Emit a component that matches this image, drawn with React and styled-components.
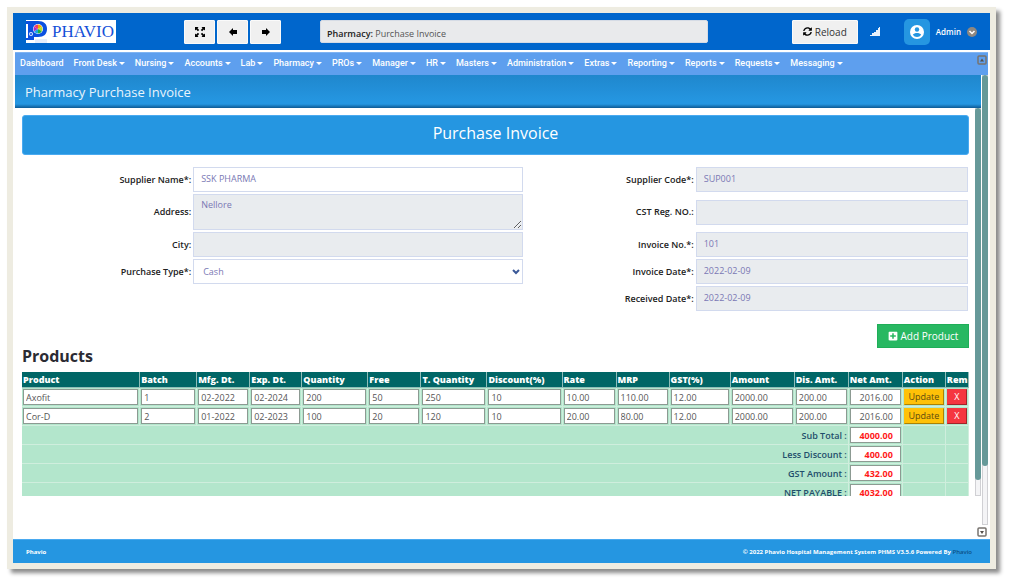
import React from "react";
import styled, { createGlobalStyle } from "styled-components";
import { FaPlusSquare, FaSyncAlt } from "react-icons/fa";

const menus = [
  "Front Desk",
  "Nursing",
  "Accounts",
  "Lab",
  "Pharmacy",
  "PROs",
  "Manager",
  "HR",
  "Masters",
  "Administration",
  "Extras",
  "Reporting",
  "Reports",
  "Requests",
  "Messaging",
];

// share = relative width of the column
const columns = [
  { name: "Product", share: 118 },
  { name: "Batch", share: 57 },
  { name: "Mfg. Dt.", share: 53 },
  { name: "Exp. Dt.", share: 52 },
  { name: "Quantity", share: 66 },
  { name: "Free", share: 53 },
  { name: "T. Quantity", share: 66 },
  { name: "Discount(%)", share: 75 },
  { name: "Rate", share: 54 },
  { name: "MRP", share: 53 },
  { name: "GST(%)", share: 61 },
  { name: "Amount", share: 64 },
  { name: "Dis. Amt.", share: 54 },
  { name: "Net Amt.", share: 54 },
  { name: "Action", share: 43 },
  { name: "Rem", share: 23 },
];
const totalShare = columns.reduce((sum, c) => sum + c.share, 0);

const products = [
  ["Axofit", "1", "02-2022", "02-2024", "200", "50", "250", "10", "10.00", "110.00", "12.00", "2000.00", "200.00", "2016.00"],
  ["Cor-D", "2", "01-2022", "02-2023", "100", "20", "120", "10", "20.00", "80.00", "12.00", "2000.00", "200.00", "2016.00"],
];

const totals = [
  ["Sub Total :", "4000.00"],
  ["Less Discount :", "400.00"],
  ["GST Amount :", "432.00"],
  ["NET PAYABLE :", "4032.00"],
];

const LogoMark = () => (
  <svg width="22" height="23" viewBox="0 0 22 23" aria-hidden="true">
    <path d="M0 1h12c6 0 9 3 9 8s-3 8-9 8H8v3H0v-2h2V4H0z" fill="#0a50e0" />
    <circle cx="12" cy="9" r="5" fill="#fff" />
    <path d="M12 9V4.500a4.500 4.500 0 0 1 3.900 2.200z" fill="#f7a600" />
    <path d="M12 9l3.900-2.300a4.500 4.500 0 0 1 0 4.600z" fill="#b6dd2a" />
    <path d="M12 9l3.900 2.300A4.500 4.500 0 0 1 12 13.500z" fill="#1fb141" />
    <path d="M12 9v4.500a4.500 4.500 0 0 1-3.900-2.200z" fill="#19a7e0" />
    <path d="M12 9l-3.900 2.300a4.500 4.500 0 0 1 0-4.600z" fill="#a52fc8" />
    <path d="M12 9L8.100 6.700A4.500 4.500 0 0 1 12 4.500z" fill="#f03a6a" />
    <circle cx="5" cy="14" r="2" fill="#dfe9ff" />
    <circle cx="5" cy="14" r="1" fill="#0a50e0" />
    <path d="M9 20h12M9 22h12" stroke="#cddcf8" />
  </svg>
);

const ExpandIcon = () => (
  <svg width="12" height="12" viewBox="0 0 12 12" aria-hidden="true">
    <path
      d="M1 1h3.500L3.500 2.200 5.200 3.900 3.900 5.200 2.200 3.500 1 4.500zM11 1v3.500L9.800 3.500 8.100 5.200 6.800 3.900 8.500 2.200 7.500 1zM1 11V7.500l1.200 1 1.700-1.700 1.300 1.300-1.700 1.700 1 1.200zM11 11H7.500l1-1.200-1.700-1.700 1.300-1.300 1.700 1.700 1.200-1z"
      fill="#000"
    />
  </svg>
);

const FatArrow = ({ flip }) => (
  <svg width="8" height="8" viewBox="0 0 8 8" aria-hidden="true">
    <path d={flip ? "M8 4L4 0v2H0v4h4v2z" : "M0 4l4-4v2h4v4H4v2z"} fill="#000" />
  </svg>
);

const SignalIcon = () => (
  <svg width="10" height="9" viewBox="0 0 10 9" role="img" aria-label="Signal">
    <path d="M0 9V8h2V6h2V5h2V3h2V1h1V0h1v9z" fill="#e8f1fb" />
  </svg>
);

const PersonIcon = () => (
  <svg width="14" height="14" viewBox="0 0 14 14" aria-hidden="true">
    <circle cx="7" cy="7" r="7" fill="#fff" />
    <circle cx="7" cy="4.500" r="2.200" fill="#2596e1" />
    <path d="M2.800 9.800C3.500 8.600 5.500 8 7 8s3.500.600 4.200 1.800A5 5 0 0 1 7 12a5 5 0 0 1-4.200-2.200z" fill="#2596e1" />
  </svg>
);

const CircleChevron = () => (
  <svg width="10" height="10" viewBox="0 0 10 10" aria-hidden="true">
    <circle cx="5" cy="5" r="5" fill="#8d8780" />
    <path d="M2.500 4L5 6.500 7.500 4" fill="none" stroke="#fff" strokeWidth="1.500" />
  </svg>
);

const ScrollArrow = ({ up }) => (
  <svg width="10" height="10" viewBox="0 0 10 10" aria-hidden="true">
    <rect x="1" y="1" width="8" height="8" rx="1" fill={up ? "none" : "#fff"} stroke="#77736f" strokeWidth="1.500" />
    <path d={up ? "M3 6.500h4L5 3.500z" : "M3 4h4L5 7z"} fill="#55504c" />
  </svg>
);

const Field = ({ id, label, value, col, row, readOnly }) => (
  <>
    <Label htmlFor={id} $col={col} $row={row}>
      {label}
    </Label>
    <TextBox id={id} defaultValue={value} readOnly={readOnly} $col={col + 1} $row={row} />
  </>
);

const App = () => {
  return (
    <Page>
      <GlobalStyle />
      <Frame>
        <TopBar>
          <Logo>
            <LogoMark />
            <LogoText>PHAVIO</LogoText>
          </Logo>
          <ToolGroup>
            <ToolButton aria-label="Full screen">
              <ExpandIcon />
            </ToolButton>
            <ToolButton aria-label="Back">
              <FatArrow />
            </ToolButton>
            <ToolButton aria-label="Forward">
              <FatArrow flip />
            </ToolButton>
          </ToolGroup>
          <Crumb>
            <b>Pharmacy:</b> Purchase Invoice
          </Crumb>
          <UserArea>
            <Reload>
              <FaSyncAlt size={9} color="#000" />
              Reload
            </Reload>
            <SignalIcon />
            <User>
              <Avatar>
                <PersonIcon />
              </Avatar>
              Admin
              <CircleChevron />
            </User>
          </UserArea>
        </TopBar>

        <Nav>
          <NavLink href="#">Dashboard</NavLink>
          {menus.map((name) => (
            <NavButton key={name}>
              {name}
              <Caret />
            </NavButton>
          ))}
          <NavEnd>
            <ScrollArrow up />
          </NavEnd>
        </Nav>

        <Middle>
          <Main>
            <PageTitle>Pharmacy Purchase Invoice</PageTitle>
            <Scroller>
              <Content>
                <Banner>Purchase Invoice</Banner>
                <Form>
                  <Field id="supplier" label="Supplier Name*:" value="SSK PHARMA" col={1} row={1} />
                  <Label htmlFor="address" $col={1} $row={2}>
                    Address:
                  </Label>
                  <Address id="address" defaultValue="Nellore" readOnly />
                  <Field id="city" label="City:" value="" col={1} row={3} readOnly />
                  <Label htmlFor="type" $col={1} $row={4}>
                    Purchase Type*:
                  </Label>
                  <SelectWrap>
                    <Select id="type" defaultValue="Cash">
                      <option>Cash</option>
                      <option>Credit</option>
                    </Select>
                    <svg width="8" height="6" viewBox="0 0 8 6" aria-hidden="true">
                      <path d="M1 1l3 3 3-3" fill="none" stroke="#3b5998" strokeWidth="2" />
                    </svg>
                  </SelectWrap>
                  <Field id="code" label="Supplier Code*:" value="SUP001" col={3} row={1} readOnly />
                  <Field id="cst" label="CST Reg. NO.:" value="" col={3} row={2} readOnly />
                  <Field id="invoice" label="Invoice No.*:" value="101" col={3} row={3} readOnly />
                  <Field id="invdate" label="Invoice Date*:" value="2022-02-09" col={3} row={4} readOnly />
                  <Field id="recdate" label="Received Date*:" value="2022-02-09" col={3} row={5} readOnly />
                </Form>
                <AddButton>
                  <FaPlusSquare size={10} />
                  Add Product
                </AddButton>
                <Heading>Products</Heading>
                <Table>
                  <colgroup>
                    {columns.map((c) => (
                      <Col key={c.name} $share={c.share} />
                    ))}
                  </colgroup>
                  <thead>
                    <tr>
                      {columns.map((c) => (
                        <Th key={c.name}>{c.name}</Th>
                      ))}
                    </tr>
                  </thead>
                  <tbody>
                    {products.map((p) => (
                      <tr key={p[0]}>
                        {p.map((value, i) => (
                          <Td key={columns[i].name}>
                            <CellInput
                              aria-label={columns[i].name}
                              defaultValue={value}
                              $right={i === p.length - 1}
                            />
                          </Td>
                        ))}
                        <Td>
                          <RowButton $bg="#ffc107" $color="#5c4a10">
                            Update
                          </RowButton>
                        </Td>
                        <Td>
                          <RowButton $bg="#f5363f" $color="#fff">
                            X
                          </RowButton>
                        </Td>
                      </tr>
                    ))}
                    {totals.map(([name, value]) => (
                      <tr key={name}>
                        <TotalLabel colSpan={13}>{name}</TotalLabel>
                        <Td>
                          <CellInput aria-label={name} defaultValue={value} readOnly $right $total />
                        </Td>
                        <Td />
                        <Td />
                      </tr>
                    ))}
                  </tbody>
                </Table>
              </Content>
              <Track>
                <Thumb $size={96} />
              </Track>
            </Scroller>
          </Main>
          <Rail>
            <Track>
              <Thumb $size={87} />
            </Track>
          </Rail>
          <RailEnd>
            <ScrollArrow />
          </RailEnd>
        </Middle>

        <Footer>
          <span>Phavio</span>
          <span>
            © 2022 Phavio Hospital Management System PHMS V3.5.6 Powered By <a href="#">Phavio</a>
          </span>
        </Footer>
      </Frame>
    </Page>
  );
};
export default App;

const GlobalStyle = createGlobalStyle`
  * {
    box-sizing: border-box;
  }
  body {
    margin: 0;
    background: #fff;
    font-family: "Open Sans", "Liberation Sans", sans-serif;
    font-size: 9px;
  }
  button, input, select, textarea {
    font-family: inherit;
    font-size: inherit;
    margin: 0;
    border-radius: 0;
  }
  svg {
    display: block;
    flex-shrink: 0;
  }
`;

const Page = styled.div`
  height: 100vh;
  padding: 7px 15px 15px 7px;
`;
const Frame = styled.div`
  height: 100%;
  display: flex;
  flex-direction: column;
  background: #fff;
  border: 6px solid #eeece1;
  box-shadow: 4px 4px 4px #8c8c8c;
`;

const TopBar = styled.header`
  height: 37px;
  padding: 0 13px;
  display: flex;
  align-items: center;
  background: #0066cc;
`;
const Logo = styled.div`
  width: 90px;
  height: 23px;
  display: flex;
  align-items: center;
  gap: 4px;
  background: #fff;
`;
const LogoText = styled.span`
  font-family: "Liberation Serif", serif;
  font-size: 17px;
  line-height: 24px;
  color: #1450d8;
`;
const ToolGroup = styled.div`
  display: flex;
  gap: 2px;
  margin: 0 39px 0 68px;
`;
const ToolButton = styled.button`
  width: 31px;
  height: 24px;
  padding: 0;
  display: flex;
  align-items: center;
  justify-content: center;
  background: #f0f0f0;
  border: 1px solid #fafafa;
  border-radius: 1px;
`;
const Crumb = styled.div`
  flex: 1;
  height: 23px;
  padding: 0 6px;
  line-height: 26px;
  white-space: nowrap;
  color: #555;
  background: #e9eaec;
  border: 1px solid #d5dbe5;
  border-radius: 2px;
  b {
    font-weight: 600;
    color: #222;
  }
`;
const UserArea = styled.div`
  display: flex;
  align-items: center;
  margin-left: 84px;
  gap: 12px;
`;
const Reload = styled.button`
  width: 66px;
  height: 24px;
  padding: 0;
  display: flex;
  align-items: center;
  justify-content: center;
  gap: 3px;
  font-size: 10px;
  color: #333;
  background: #f0f0f0;
  border: 1px solid #fafafa;
  border-radius: 1px;
`;
const User = styled.div`
  display: flex;
  align-items: center;
  gap: 6px;
  margin-left: 12px;
  font-size: 8px;
  font-weight: 600;
  color: #fff;
`;
const Avatar = styled.span`
  width: 26px;
  height: 26px;
  display: flex;
  align-items: center;
  justify-content: center;
  background: #2596e1;
  border-radius: 5px;
`;

const Nav = styled.nav`
  height: 23px;
  margin: 2px 2px 0;
  padding: 0 5px;
  display: flex;
  align-items: flex-start;
  gap: 10px;
  position: relative;
  background: #5e9fee;
  border-top: 1px solid #7fb3f2;
`;
const NavLink = styled.a`
  font-family: Roboto, sans-serif;
  font-size: 9px;
  font-weight: 500;
  line-height: 21px;
  color: #fff;
  text-decoration: none;
`;
const NavButton = styled.button`
  padding: 0;
  display: flex;
  align-items: center;
  gap: 2px;
  font-family: Roboto, sans-serif;
  font-size: 9px;
  font-weight: 500;
  line-height: 21px;
  white-space: nowrap;
  color: #fff;
  background: none;
  border: 0;
`;
const Caret = styled.span`
  border: 3px solid transparent;
  border-top-color: #fff;
  border-bottom: 0;
`;
const NavEnd = styled.span`
  position: absolute;
  top: 2px;
  right: 1px;
`;

const Middle = styled.div`
  flex: 1;
  min-height: 0;
  margin: 0 2px;
  display: flex;
  gap: 1px;
  position: relative;
`;
const Main = styled.main`
  flex: 1;
  min-width: 0;
  display: flex;
  flex-direction: column;
  padding-bottom: 43px;
`;
const PageTitle = styled.h1`
  margin: 0;
  padding: 0 10px;
  height: 33px;
  font-size: 13px;
  font-weight: 400;
  line-height: 34px;
  color: #e9f4fc;
  background: linear-gradient(#1f87cd, #2596e1 80%, #2596e1 88%, #0d5a94);
`;
const Scroller = styled.div`
  flex: 1;
  min-height: 0;
  display: flex;
  overflow: hidden;
`;
const Content = styled.div`
  flex: 1;
  min-width: 0;
  padding: 7px 6px 7px 7px;
`;
const Rail = styled.div`
  display: flex;
  padding-bottom: 14px;
`;
const RailEnd = styled.span`
  position: absolute;
  right: 1px;
  bottom: 2px;
`;
const Track = styled.div`
  width: 6px;
  background: #f4f4f6;
  border: solid #d0d0d4;
  border-width: 0 1px 1px;
`;
const Thumb = styled.div`
  height: ${(props) => props.$size}%;
  margin: 0 -1px;
  background: #669999;
  border-radius: 3px;
`;

const Banner = styled.h2`
  margin: 0 0 12px;
  height: 40px;
  font-size: 16px;
  font-weight: 400;
  line-height: 34px;
  text-align: center;
  color: #fff;
  background: #2596e1;
  border: 1px solid #4aaaf0;
  border-radius: 3px;
`;

const Form = styled.div`
  display: grid;
  grid-template-columns: 171fr 329fr 173fr 272fr;
  grid-template-rows: 25px 36px 25px 25px 25px;
  gap: 2px 0;
  align-items: center;
  padding-right: 1px;
`;
const Label = styled.label`
  grid-column: ${(props) => props.$col};
  grid-row: ${(props) => props.$row};
  padding: 0 2px 1px 0;
  text-align: right;
  font-weight: 600;
  color: #222;
`;
const TextBox = styled.input`
  grid-column: ${(props) => props.$col};
  grid-row: ${(props) => props.$row};
  width: 100%;
  height: 25px;
  padding: 0 7px 2px;
  color: #7a78b4;
  background: ${(props) => (props.readOnly ? "#e9ecef" : "#fff")};
  border: 1px solid #d2daee;
`;
const Address = styled.textarea`
  grid-column: 2;
  grid-row: 2;
  width: 100%;
  height: 36px;
  padding: 3px 7px;
  color: #7a78b4;
  background: #e9ecef;
  border: 1px solid #d2daee;
`;
const SelectWrap = styled.div`
  grid-column: 2;
  grid-row: 4;
  position: relative;
  svg {
    position: absolute;
    right: 3px;
    top: 10px;
    pointer-events: none;
  }
`;
const Select = styled.select`
  width: 100%;
  height: 25px;
  padding: 0 9px;
  appearance: none;
  color: #7a78b4;
  background: #fff;
  border: 1px solid #d2daee;
`;

const AddButton = styled.button`
  width: 92px;
  height: 24px;
  margin: 13px 0 0 auto;
  padding: 0;
  display: flex;
  align-items: center;
  justify-content: center;
  gap: 3px;
  font-size: 10px;
  color: #fff;
  background: #28b862;
  border: 1px solid #1fae58;
`;
const Heading = styled.h3`
  margin: 0;
  font-size: 16px;
  font-weight: 700;
  line-height: 16px;
  padding-bottom: 8px;
  color: #2b2b33;
`;

const Table = styled.table`
  width: 100%;
  table-layout: fixed;
  border-collapse: separate;
  border-spacing: 0;
  background: #b3e6cc;
`;
const Col = styled.col`
  width: ${(props) => (props.$share / totalShare) * 100}%;
`;
const Th = styled.th`
  height: 16px;
  padding: 0 0 0 1px;
  overflow: hidden;
  font-size: 9px;
  font-weight: 800;
  line-height: 14px;
  text-align: left;
  white-space: nowrap;
  color: #fff;
  background: #006666;
  border-right: 1px solid #8fbdb8;
  border-bottom: 1px solid #8fbdb8;
`;
const Td = styled.td`
  height: 19px;
  padding: 1px;
  border-right: 1px solid #cfeedd;
  border-bottom: 1px solid #cfeedd;
`;
const TotalLabel = styled.th`
  height: 19px;
  padding: 1px 1px 0;
  font-weight: 600;
  text-align: right;
  color: #1f4e6b;
  border-right: 1px solid #cfeedd;
  border-bottom: 1px solid #cfeedd;
`;
const CellInput = styled.input`
  display: block;
  width: 100%;
  height: 16px;
  padding: 0 ${(props) => (props.$right ? 7 : 2)}px 0 2px;
  text-align: ${(props) => (props.$right ? "right" : "left")};
  font-weight: ${(props) => (props.$total ? 700 : 400)};
  color: ${(props) => (props.$total ? "#ff1a1a" : "#555")};
  background: #fff;
  border: 1px solid #8c9a92;
`;
const RowButton = styled.button`
  display: block;
  width: 100%;
  height: 16px;
  padding: 0;
  line-height: 14px;
  color: ${(props) => props.$color};
  background: ${(props) => props.$bg};
  border: 1px outset ${(props) => props.$bg};
`;

const Footer = styled.footer`
  height: 24px;
  padding: 0 18px 0 13px;
  display: flex;
  justify-content: space-between;
  align-items: center;
  font-size: 6px;
  font-weight: 700;
  color: #fff;
  background: #2596e1;
  border-top: 1px solid #4aaaf0;
  a {
    font-weight: 600;
    color: #0b4f86;
    text-decoration: none;
  }
`;
